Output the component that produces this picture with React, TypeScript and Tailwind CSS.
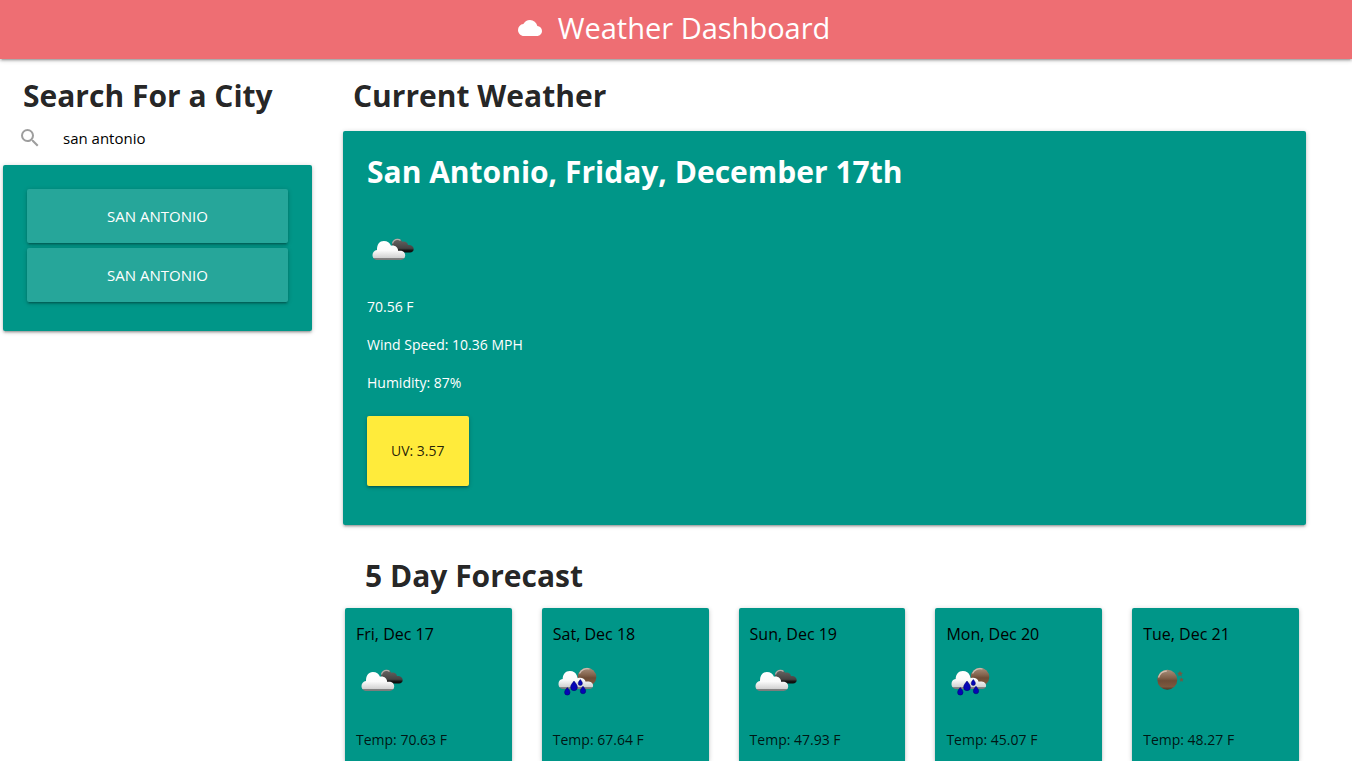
import React, { useId, useState } from "react";
import { MdCloud, MdSearch } from "react-icons/md";

type Sky = "clouds" | "rain" | "clear";

interface Day {
  date: string;
  sky: Sky;
  temp: string;
}

const searches = ["San Antonio", "San Antonio"];

const forecast: Day[] = [
  { date: "Fri, Dec 17", sky: "clouds", temp: "70.63" },
  { date: "Sat, Dec 18", sky: "rain", temp: "67.64" },
  { date: "Sun, Dec 19", sky: "clouds", temp: "47.93" },
  { date: "Mon, Dec 20", sky: "rain", temp: "45.07" },
  { date: "Tue, Dec 21", sky: "clear", temp: "48.27" },
];

const raised =
  "shadow-[0_2px_2px_0_rgba(0,0,0,0.14),0_3px_1px_-2px_rgba(0,0,0,0.12),0_1px_5px_0_rgba(0,0,0,0.2)]";

function WeatherIcon({ sky }: { sky: Sky }) {
  const id = useId();
  const white = `${id}-white`;
  const dark = `${id}-dark`;
  const moon = `${id}-moon`;
  return (
    <svg viewBox="0 0 50 50" className="block size-[50px]" role="img" aria-label={sky}>
      <defs>
        <linearGradient id={white} x1="0" y1="0" x2="0" y2="1">
          <stop offset="0" stopColor="#ffffff" />
          <stop offset="0.5" stopColor="#fafafa" />
          <stop offset="0.88" stopColor="#d2d2d2" />
          <stop offset="0.92" stopColor="#808080" />
          <stop offset="1" stopColor="#7a7a7a" />
        </linearGradient>
        <linearGradient id={dark} x1="0" y1="0" x2="0" y2="1">
          <stop offset="0" stopColor="#6a6664" />
          <stop offset="0.7" stopColor="#454343" />
          <stop offset="0.85" stopColor="#151515" />
          <stop offset="1" stopColor="#0a0a0a" />
        </linearGradient>
        <linearGradient id={moon} x1="0" y1="0" x2="0" y2="1">
          <stop offset="0" stopColor="#a88f7c" />
          <stop offset="0.4" stopColor="#82624b" />
          <stop offset="0.55" stopColor="#6d4c36" />
          <stop offset="0.85" stopColor="#7c583e" />
          <stop offset="1" stopColor="#4b3424" />
        </linearGradient>
      </defs>
      {sky === "clouds" && (
        <>
          <path
            d="M25 20c0-4 2.500-6.300 5.500-6.300 2.300 0 3.800 1.200 4.700 3 3-.9 5.300.6 5.800 3.300 3.200-.5 5.700 1.300 5.700 4 0 2.200-1.500 3.400-3.700 3.400H30z"
            fill={`url(#${dark})`}
          />
          <path d="M25.500 18.500c.8-3 2.600-4.200 5-4.200 1.300 0 2.300.4 3 1.200" fill="none" stroke="#b5b0ac" strokeWidth="1.200" />
          <path
            d="M11 35C7.500 35 5.500 33 5.500 30c0-2.800 1.800-4.700 4.500-5.100C9.900 19.500 12.500 16 16.800 16c3.700 0 6 1.900 7.200 4.700 3.700-.9 6.900 1.400 7.300 5.300 4.400-.7 6.900 1.500 6.900 4.600 0 2.700-1.900 4.400-4.700 4.400z"
            fill={`url(#${white})`}
          />
        </>
      )}
      {sky === "rain" && (
        <>
          <circle cx="34" cy="21" r="9.300" fill={`url(#${moon})`} />
          <path d="M26.500 17.500a8.500 8.500 0 0 1 10-4.500" fill="none" stroke="#cdbfb4" strokeWidth="1.200" />
          <path
            d="M11 33C7.500 33 5.500 31 5.500 28c0-2.700 1.600-4.500 4.200-4.900C9.700 18.300 12.500 15 16.800 15c3.700 0 5.900 1.700 6.900 4.300l1 3c3-1.300 7 0 8 3.400 4-.7 7.400.9 7.400 3.900 0 2.200-1.500 3.400-3.700 3.400z"
            fill={`url(#${white})`}
          />
          <g fill="#0505b5" stroke="#02026a" strokeWidth="0.500">
            <path d="M14.300 31.500c1.500 2 2.700 3.200 2.700 4.900a2.700 2.700 0 0 1-5.400 0c0-1.700 1.200-2.900 2.700-4.900z" />
            <path d="M21 25c2 2.700 3.400 4.200 3.400 6.300a3.400 3.400 0 0 1-6.800 0c0-2.100 1.400-3.600 3.400-6.300z" />
            <path d="M27.300 23.500c1.200 1.600 2.100 2.600 2.100 3.900a2.100 2.100 0 0 1-4.200 0c0-1.300.9-2.300 2.100-3.900z" />
            <path d="M30 30.200c1.500 2 2.700 3.200 2.700 4.900a2.700 2.700 0 0 1-5.400 0c0-1.700 1.200-2.900 2.700-4.900z" />
          </g>
        </>
      )}
      {sky === "clear" && (
        <>
          <circle cx="24.300" cy="23.700" r="10" fill={`url(#${moon})`} />
          <path d="M15.500 21.500c1.200-4 4.300-6.500 8.300-6.500" fill="none" stroke="#d2bdac" strokeWidth="1.300" />
          <g fill="#6f5a45">
            <path d="M37 14.800l.9 1.800 2 .3-1.500 1.400.4 2-1.800-1-1.800 1 .4-2-1.500-1.400 2-.3z" />
            <path d="M38.500 21.300l.7 1.500 1.600.2-1.200 1.100.3 1.600-1.400-.8-1.400.8.300-1.600-1.200-1.100 1.600-.2z" />
          </g>
        </>
      )}
    </svg>
  );
}

export default function App() {
  const [city, setCity] = useState("san antonio");

  return (
    <div className="flex min-h-screen flex-col bg-white font-['Open_Sans','Noto_Sans',sans-serif] text-[14px] leading-[22px] text-black/87">
      <header className={`flex h-[59px] items-center justify-center gap-4 bg-[#ee6e73] pr-1 pb-1 text-white ${raised}`}>
        <MdCloud className="size-6" aria-hidden="true" />
        <span className="text-[29px] leading-[58px]">Weather Dashboard</span>
      </header>

      <div className="flex grow">
        <aside className="w-1/4 pt-4 pr-[26px] pl-[3px]">
          <h2 className="pl-5 text-[30px] leading-[42px] font-bold">Search For a City</h2>
          <form className="flex h-12 items-center pb-1.5 pl-[15px]" onSubmit={(e) => e.preventDefault()}>
            <label htmlFor="city" aria-label="City" className="mr-[21px] text-[#9e9e9e]">
              <MdSearch className="size-6" aria-hidden="true" />
            </label>
            <input
              id="city"
              type="text"
              value={city}
              onChange={(e) => setCity(e.target.value)}
              className="w-full min-w-0 bg-transparent text-[15px] text-black outline-none"
            />
          </form>
          <div className={`flex flex-col gap-[5px] rounded-[2px] bg-[#009688] px-6 pt-6 pb-[29px] ${raised}`}>
            {searches.map((name, i) => (
              <button
                key={i}
                type="button"
                className={`h-[54px] w-full rounded-[2px] bg-[#26a69a] text-[15px] text-white uppercase ${raised}`}
              >
                {name}
              </button>
            ))}
          </div>
        </aside>

        <main className="flex w-3/4 flex-col pt-4">
          <h2 className="pl-[15px] text-[30px] leading-[42px] font-bold">Current Weather</h2>
          <section className={`mt-[14px] mr-[46px] ml-[5px] rounded-[2px] bg-[#009688] px-6 pt-5 pb-[39px] text-white ${raised}`}>
            <h2 className="text-[30px] leading-[42px] font-bold">San Antonio, Friday, December 17th</h2>
            <div className="mt-8">
              <WeatherIcon sky="clouds" />
            </div>
            <div className="mt-[21px] flex flex-col gap-4">
              <p>70.56 F</p>
              <p>Wind Speed: 10.36 MPH</p>
              <p>Humidity: 87%</p>
            </div>
            <div className={`mt-[22px] inline-block rounded-[2px] bg-[#ffeb3b] p-6 align-top text-black/87 ${raised}`}>
              UV: 3.57
            </div>
          </section>

          <h2 className="mt-[30px] pl-[27px] text-[30px] leading-[42px] font-bold">5 Day Forecast</h2>
          <div className="mt-[11px] mr-[53px] ml-[7px] grid grow grid-cols-5 gap-[30px]">
            {forecast.map((day) => (
              <article key={day.date} className={`rounded-t-[2px] bg-[#009688] px-[11px] pt-[14px] ${raised}`}>
                <h3 className="text-[16px] leading-6 text-black">{day.date}</h3>
                <div className="mt-[10px] mb-[23px]">
                  <WeatherIcon sky={day.sky} />
                </div>
                <p>Temp: {day.temp} F</p>
              </article>
            ))}
          </div>
        </main>
      </div>
    </div>
  );
}
